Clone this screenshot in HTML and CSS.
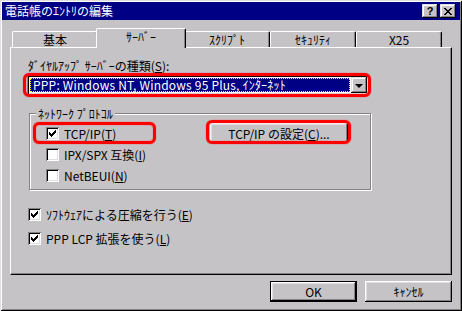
FILE: index.html
```html
<!DOCTYPE html>
<html lang="ja">
<head>
  <meta charset="UTF-8" />
  <title>電話帳のｴﾝﾄﾘの編集</title>
  <link rel="stylesheet" href="styles.css">
</head>
<body>
  <div class="window">
    <div class="titlebar">
      <span class="title">電話帳のｴﾝﾄﾘの編集</span>
      <div class="title-btns">
        <span class="tbtn help">?</span>
        <span class="tbtn close">
          <svg viewBox="0 0 8 7" width="8" height="7"><path d="M0 0h2v1H0zM6 0h2v1H6zM1 1h2v1H1zM5 1h2v1H5zM2 2h4v1H2zM3 3h2v1H3zM2 4h4v1H2zM1 5h2v1H1zM5 5h2v1H5zM0 6h2v1H0zM6 6h2v1H6z"/></svg>
        </span>
      </div>
    </div>

    <div class="body">
      <div class="tabs">
        <div class="tab">基本</div>
        <div class="tab active">ｻｰﾊﾞｰ</div>
        <div class="tab">ｽｸﾘﾌﾟﾄ</div>
        <div class="tab">ｾｷｭﾘﾃｨ</div>
        <div class="tab">X25</div>
      </div>

      <div class="panel">
        <div class="label">ﾀﾞｲﾔﾙｱｯﾌﾟ ｻｰﾊﾞｰの種類(<u>S</u>):</div>
        <div class="combo mark">
          <span class="combo-value">PPP: Windows NT, Windows 95 Plus, ｲﾝﾀｰﾈｯﾄ</span>
          <span class="combo-btn"><i class="arrow"></i></span>
        </div>

        <div class="group">
          <div class="group-title">ﾈｯﾄﾜｰｸ ﾌﾟﾛﾄｺﾙ</div>
          <div class="proto-row first">
            <div class="item-cell">
              <label class="check-item mark mark-tcp">
                <span class="box"><svg class="tick" viewBox="0 0 7 7" width="7" height="7"><path d="M0 2h1v3H0zM1 3h1v3H1zM2 4h1v3H2zM3 3h1v3H3zM4 2h1v3H4zM5 1h1v3H5zM6 0h1v3H6z"/></svg></span>
                <span>TCP/IP(<u>T</u>)</span>
              </label>
            </div>
            <span class="mark mark-btn"><button class="btn wide">TCP/IP の設定(<u>C</u>)...</button></span>
          </div>
          <div class="proto-row">
            <label class="check-item"><span class="box"></span><span>IPX/SPX 互換(<u>I</u>)</span></label>
          </div>
          <div class="proto-row">
            <label class="check-item"><span class="box"></span><span>NetBEUI(<u>N</u>)</span></label>
          </div>
        </div>

        <div class="opt-row first">
          <label class="check-item">
            <span class="box"><svg class="tick" viewBox="0 0 7 7" width="7" height="7"><path d="M0 2h1v3H0zM1 3h1v3H1zM2 4h1v3H2zM3 3h1v3H3zM4 2h1v3H4zM5 1h1v3H5zM6 0h1v3H6z"/></svg></span>
            <span>ｿﾌﾄｳｪｱによる圧縮を行う(<u>E</u>)</span>
          </label>
        </div>
        <div class="opt-row">
          <label class="check-item">
            <span class="box"><svg class="tick" viewBox="0 0 7 7" width="7" height="7"><path d="M0 2h1v3H0zM1 3h1v3H1zM2 4h1v3H2zM3 3h1v3H3zM4 2h1v3H4zM5 1h1v3H5zM6 0h1v3H6z"/></svg></span>
            <span>PPP LCP 拡張を使う(<u>L</u>)</span>
          </label>
        </div>
      </div>

      <div class="actions">
        <button class="btn default">OK</button>
        <button class="btn">ｷｬﾝｾﾙ</button>
      </div>
    </div>
  </div>
</body>
</html>
```

FILE: styles.css
```css
body {
  margin: 0;
  background: #c6c3c6;
  font-family: "Noto Sans CJK JP", sans-serif;
  font-size: 12px;
  color: #000;
}

u {
  text-decoration: underline;
  text-underline-offset: 1px;
}

.window {
  width: 462px;
  height: 311px;
  box-sizing: border-box;
  padding: 2px;
  background: #c6c3c6;
  box-shadow: inset 1px 1px #dedfde, inset -1px -1px #000,
              inset 2px 2px #fff, inset -2px -2px #848284;
}

.titlebar {
  height: 18px;
  background: #000084;
  color: #fff;
  display: flex;
  align-items: center;
  justify-content: space-between;
  padding: 0 4px 0 3px;
}

.title {
  line-height: 18px;
}

.title-btns {
  display: flex;
  gap: 2px;
}

.tbtn {
  width: 16px;
  height: 14px;
  box-sizing: border-box;
  background: #c6c3c6;
  color: #000;
  display: flex;
  align-items: center;
  justify-content: center;
  font: bold 11px "Liberation Sans", sans-serif;
  box-shadow: inset -1px -1px #000, inset 1px 1px #dedfde,
              inset -2px -2px #848284, inset 2px 2px #fff;
}

.body {
  padding: 8px 8px 0;
}

/* tabs */
.tabs {
  display: flex;
  align-items: flex-end;
  height: 19px;
  padding-left: 2px;
}

.tab {
  width: 86px;
  height: 16px;
  box-sizing: border-box;
  border-top: 1px solid #fff;
  border-left: 1px solid #fff;
  border-right: 1px solid #000;
  border-radius: 2px 2px 0 0;
  box-shadow: inset -1px 0 #848284;
  text-align: center;
  line-height: 15px;
}

.tab.active {
  width: 90px;
  height: 20px;
  margin: 0 -2px -1px;
  position: relative;
  z-index: 1;
  background: #c6c3c6;
}

.panel {
  height: 228px;
  box-sizing: border-box;
  border-top: 1px solid #fff;
  border-left: 1px solid #fff;
  border-right: 1px solid #000;
  border-bottom: 1px solid #000;
  box-shadow: inset -1px -1px #848284;
  padding: 11px 16px 0 17px;
}

.label {
  line-height: 14px;
}

/* combo box */
.combo {
  display: flex;
  width: 342px;
  height: 20px;
  box-sizing: border-box;
  margin: 2px 0 0 -1px;
  padding: 2px;
  background: #fff;
  box-shadow: inset 1px 1px #848284, inset -1px -1px #fff,
              inset 2px 2px #000, inset -2px -2px #dedfde;
}

.combo-value {
  flex: 1;
  margin: 1px;
  padding-left: 2px;
  background: #000084;
  color: #fff;
  border: 1px dotted #ffff00;
  line-height: 12px;
  white-space: nowrap;
  letter-spacing: 0.2px;
}

.combo-btn {
  width: 16px;
  height: 16px;
  box-sizing: border-box;
  background: #c6c3c6;
  display: flex;
  align-items: center;
  justify-content: center;
  box-shadow: inset -1px -1px #000, inset 1px 1px #dedfde,
              inset -2px -2px #848284, inset 2px 2px #fff;
}

.arrow {
  width: 0;
  height: 0;
  border-left: 4px solid transparent;
  border-right: 4px solid transparent;
  border-top: 4px solid #000;
  margin-top: 1px;
}

/* red highlight rings */
.mark {
  position: relative;
}

.mark::after {
  content: "";
  position: absolute;
  border: 3px solid #f00;
  border-radius: 6px;
  box-shadow: 0 0 1px #f00, inset 0 0 1px #f00;
  pointer-events: none;
}

.combo.mark::after {
  left: -4px;
  right: -2px;
  top: -2px;
  bottom: -2px;
}

.mark-tcp::after {
  left: -13px;
  width: 117px;
  top: 0;
  bottom: 0;
}

.mark-btn {
  display: flex;
}

.mark-btn::after {
  left: -4px;
  right: -3px;
  top: -3px;
  bottom: -1px;
}

/* group box */
.group {
  width: 342px;
  height: 77px;
  box-sizing: border-box;
  margin: 18px 0 0 1px;
  border: 1px solid #848284;
  box-shadow: inset 1px 1px #fff, 1px 1px #fff;
}

.group-title {
  display: table;
  margin: -7px 0 0 6px;
  padding: 0 2px;
  background: #c6c3c6;
  line-height: 13px;
}

.proto-row {
  display: flex;
  align-items: center;
  height: 21px;
  padding-left: 16px;
}

.proto-row.first {
  height: 22px;
  margin-top: 2px;
}

.item-cell {
  width: 164px;
  height: 100%;
}

.check-item {
  display: inline-flex;
  align-items: center;
  gap: 5px;
  height: 100%;
  white-space: nowrap;
}

.box {
  width: 13px;
  height: 13px;
  box-sizing: border-box;
  background: #fff;
  display: flex;
  align-items: center;
  justify-content: center;
  box-shadow: inset 1px 1px #848284, inset -1px -1px #fff,
              inset 2px 2px #000, inset -2px -2px #dedfde;
}

.tick {
  display: block;
}

.opt-row {
  display: flex;
  align-items: center;
  height: 24px;
}

.opt-row.first {
  margin-top: 12px;
}

/* push buttons */
.btn {
  font: inherit;
  color: #000;
  width: 87px;
  height: 21px;
  padding: 0;
  border: 0;
  background: #c6c3c6;
  box-shadow: inset -1px -1px #000, inset 1px 1px #fff,
              inset -2px -2px #848284, inset 2px 2px #dedfde;
}

.btn.wide {
  width: 138px;
  height: 20px;
}

.btn.default {
  box-shadow: inset 0 0 0 1px #000, inset -2px -2px #000,
              inset 2px 2px #fff, inset -3px -3px #848284,
              inset 3px 3px #dedfde;
}

.actions {
  display: flex;
  justify-content: flex-end;
  gap: 8px;
  margin-top: 6px;
}
```
